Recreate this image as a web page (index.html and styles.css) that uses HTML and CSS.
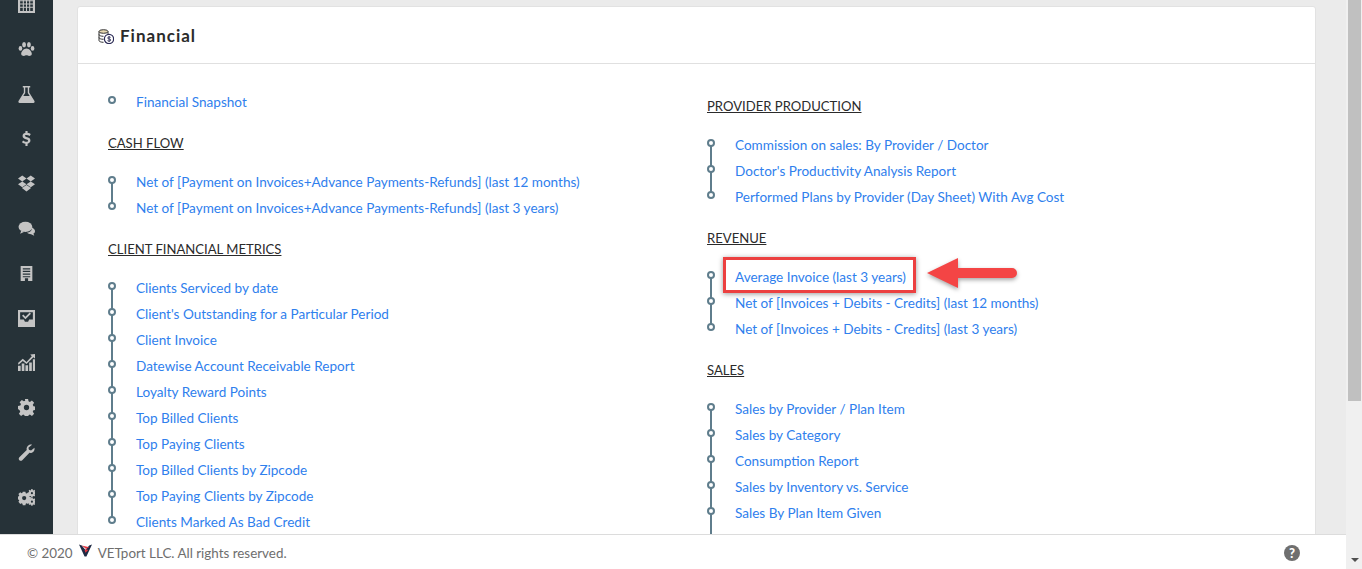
FILE: index.html
```html
<!DOCTYPE html>
<html lang="en">
<head>
<meta charset="utf-8">
<title>Financial Reports</title>
<link rel="stylesheet" href="styles.css">
</head>
<body>
<div class="app">
  <nav class="sidebar">
    <svg class="ico" viewBox="0 0 16 16"><path d="M0 0v16h16V0zM2 2h2.500v2H2zM5.500 2h2v2h-2zM8.500 2h2v2h-2zM11.500 2H14v2h-2.500zM2 5h2.500v2H2zM5.500 5h2v2h-2zM8.500 5h2v2h-2zM11.500 5H14v2h-2.500zM2 8h2.500v2H2zM5.500 8h2v2h-2zM8.500 8h2v2h-2zM11.500 8H14v2h-2.500zM2 11h2.500v3H2zM5.500 11h2v3h-2zM8.500 11h2v3h-2zM11.500 11H14v3h-2.500z" fill-rule="evenodd"/></svg>
    <svg class="ico" viewBox="0 0 16 16"><ellipse cx="2.300" cy="7" rx="1.700" ry="2.200"/><ellipse cx="5.700" cy="3.500" rx="1.800" ry="2.500"/><ellipse cx="10.300" cy="3.500" rx="1.800" ry="2.500"/><ellipse cx="13.700" cy="7" rx="1.700" ry="2.200"/><path d="M8 7c-2.500 0-5 3-5 5 0 2 1.500 2 2.500 2S7 13.500 8 13.500s1.500.5 2.500.5 2.500 0 2.500-2c0-2-2.500-5-5-5z"/></svg>
    <svg class="ico" viewBox="0 0 16 16"><path d="M4.500 0h7v1.300h-1V6l5 8.200c.4.800 0 1.800-1 1.800h-13c-1 0-1.400-1-1-1.800l5-8.200V1.300h-1zM6.800 1.300v5.200L5 9.500h6L9.200 6.500V1.300z" fill-rule="evenodd"/></svg>
    <svg class="ico" viewBox="0 0 16 16"><path d="M7 1h2v1.600c1.300.2 2.300.7 3 1.200l-1 1.800c-.9-.6-1.900-1-3-1-1 0-1.500.4-1.500.9 0 .7 1 1 2.200 1.400 1.800.5 3 1.300 3 3 0 1.600-1.200 2.700-2.700 3V15H7v-2c-1.300-.2-2.500-.7-3.300-1.400l1.100-1.800c.9.700 2 1.200 3.100 1.200 1 0 1.600-.4 1.600-1 0-.7-.9-1-2.200-1.400C5.600 8.100 4.300 7.300 4.300 5.600c0-1.500 1.100-2.700 2.700-3z"/></svg>
    <svg class="ico" viewBox="0 0 16 16"><path d="M4 .5l4 2.700L4 6 0 3.200zM12 .5l4 2.700L12 6 8 3.200zM0 8.800L4 6l4 2.800-4 2.700zM16 8.800L12 6 8 8.800l4 2.700zM3.700 12.300L8 9.500l4.300 2.800L8 15.500z"/></svg>
    <svg class="ico" viewBox="0 0 16 16"><ellipse cx="7" cy="6.500" rx="6.500" ry="4.800"/><path d="M3 10l-1 3 4-2zM13 7c2 1 3 2 3 3.500 0 1-.6 1.800-1.500 2.300l.8 2-3-1.500c-1.500 0-3-.5-3.800-1.500 2.500 0 5-2 4.500-4.800z"/></svg>
    <svg class="ico" viewBox="0 0 16 16"><path d="M2.500 1h11v14h-4v-2.500h-3V15h-4zM4.500 3v1.200h7V3zM4.500 5.500v1.200h7V5.500zM4.500 8v1.200h7V8zM4.500 10.500v1h7v-1z" fill-rule="evenodd"/></svg>
    <svg class="ico" viewBox="0 0 16 16"><path d="M0 0h16v16H0zM2 2v7h3.500l1 2h3l1-2H14V2zM3.800 5.500L5 4.300l2 2 4-4 1.200 1.200L7 8.800z" fill-rule="evenodd"/></svg>
    <svg class="ico" viewBox="0 0 16 16"><path d="M0 11h2.500v5H0zM3.500 9H6v7H3.500zM7 10.500h2.500V16H7zM10.500 8H13v8h-2.500zM14 5h2v11h-2zM0 8.500l4.500-4 3.500 3L13 2l-1.500-1.500L16 0v4.500L14.500 3 8 9.500l-3.500-3-4 3.500z"/></svg>
    <svg class="ico" viewBox="0 0 16 16"><path d="M6.500 0h3l.4 2.200 1.300.6 1.900-1.300 2.100 2.100-1.300 1.900.6 1.300 2.200.4v3l-2.200.4-.6 1.300 1.300 1.900-2.100 2.100-1.900-1.300-1.300.6-.4 2.200h-3l-.4-2.200-1.300-.6-1.900 1.300L.8 13.800l1.300-1.900-.6-1.300L0 9.500v-3l2.200-.4.600-1.300L1.500 3l2.100-2.100 1.900 1.300 1.300-.6zM8 5.500a2.500 2.500 0 1 0 0 5 2.500 2.500 0 0 0 0-5z" fill-rule="evenodd"/></svg>
    <svg class="ico" viewBox="0 0 16 16"><path d="M15.500 3.500c.5 2-.5 4-2.500 4.700-.8.300-1.500.3-2.200.1L4 15.200c-.8.800-2 .8-2.700 0-.8-.8-.8-2 0-2.700l6.900-6.800c-.5-2 .5-4 2.500-4.900.8-.3 1.700-.4 2.500-.2L9.800 3.500l.5 2 2 .5z"/></svg>
    <svg class="ico" viewBox="0 0 16 16"><path d="M4.500 4.500h2.500l.3 1.400.9.400 1.200-.8 1.700 1.700-.8 1.200.4.900 1.400.3v2.500l-1.400.3-.4.900.8 1.200-1.700 1.700-1.200-.8-.9.400-.3 1.400H4.500l-.3-1.400-.9-.4-1.200.8L.4 14.100l.8-1.200-.4-.9-1.400-.3V9.200l1.400-.3.4-.9-.8-1.200 1.700-1.700 1.200.8.900-.4zM5.800 8.500a2 2 0 1 0 0 4 2 2 0 0 0 0-4z" fill-rule="evenodd" transform="translate(0 -2)"/><path d="M12.500 0h1.200l.2 1 .6.300.8-.5.900.9-.5.8.3.600 1 .2V4.500l-1 .2-.3.600.5.800-.9.900-.8-.5-.6.300-.2 1h-1.200l-.2-1-.6-.3-.8.500-.9-.9.500-.8-.3-.6-1-.2V3.300l1-.2.3-.6-.5-.8.900-.9.800.5.600-.3zM13.100 2.900a1 1 0 1 0 0 2 1 1 0 0 0 0-2z" fill-rule="evenodd"/><path d="M12.500 9h1.200l.2 1 .6.300.8-.5.900.9-.5.800.3.600 1 .2v1.200l-1 .2-.3.600.5.800-.9.900-.8-.5-.6.300-.2 1h-1.200l-.2-1-.6-.3-.8.500-.9-.9.500-.8-.3-.6-1-.2v-1.200l1-.2.300-.6-.5-.8.900-.9.800.5.600-.3zM13.100 11.900a1 1 0 1 0 0 2 1 1 0 0 0 0-2z" fill-rule="evenodd" transform="translate(0 -1)"/></svg>
  </nav>

  <main class="main">
    <section class="card">
      <header class="card-head">
        <svg class="fin-ico" viewBox="0 0 16 15"><g fill="none" stroke="#333" stroke-width="1"><ellipse cx="5.500" cy="2.500" rx="4.500" ry="1.800" fill="#e8d9b0"/><path d="M1 2.500v9c0 1 2 1.800 4.500 1.800M10 2.500V6M1 5.500c0 1 2 1.800 4.500 1.800M1 8.500c0 1 2 1.800 4.500 1.800" /></g><circle cx="11" cy="10" r="4.600" fill="#fff" stroke="#2a2a55" stroke-width="1.200"/><path d="M12.600 8.400c-1-.7-3-.5-3 .6 0 1.400 3.200.6 3.200 2 0 1.200-2.200 1.300-3.300.6M11.100 7v6" fill="none" stroke="#2a2a55" stroke-width=".9"/></svg>
        <h2 class="card-title">Financial</h2>
      </header>
      <div class="columns">
        <div class="col col-left">
          <ul class="timeline">
            <li><a href="#">Financial Snapshot</a></li>
          </ul>
          <h3 class="group">CASH FLOW</h3>
          <ul class="timeline">
            <li><a href="#">Net of [Payment on Invoices+Advance Payments-Refunds] (last 12 months)</a></li>
            <li><a href="#">Net of [Payment on Invoices+Advance Payments-Refunds] (last 3 years)</a></li>
          </ul>
          <h3 class="group">CLIENT FINANCIAL METRICS</h3>
          <ul class="timeline">
            <li><a href="#">Clients Serviced by date</a></li>
            <li><a href="#">Client's Outstanding for a Particular Period</a></li>
            <li><a href="#">Client Invoice</a></li>
            <li><a href="#">Datewise Account Receivable Report</a></li>
            <li><a href="#">Loyalty Reward Points</a></li>
            <li><a href="#">Top Billed Clients</a></li>
            <li><a href="#">Top Paying Clients</a></li>
            <li><a href="#">Top Billed Clients by Zipcode</a></li>
            <li><a href="#">Top Paying Clients by Zipcode</a></li>
            <li><a href="#">Clients Marked As Bad Credit</a></li>
          </ul>
        </div>
        <div class="col col-right">
          <h3 class="group">PROVIDER PRODUCTION</h3>
          <ul class="timeline">
            <li><a href="#">Commission on sales: By Provider / Doctor</a></li>
            <li><a href="#">Doctor's Productivity Analysis Report</a></li>
            <li><a href="#">Performed Plans by Provider (Day Sheet) With Avg Cost</a></li>
          </ul>
          <h3 class="group">REVENUE</h3>
          <ul class="timeline">
            <li class="marked"><a href="#">Average Invoice (last 3 years)</a>
              <svg class="arrow" viewBox="0 0 90 30"><path d="M0 15L31 0v10h54a5 5 0 0 1 0 10H31v10z" fill="#f44545"/></svg>
            </li>
            <li><a href="#">Net of [Invoices + Debits - Credits] (last 12 months)</a></li>
            <li><a href="#">Net of [Invoices + Debits - Credits] (last 3 years)</a></li>
          </ul>
          <h3 class="group">SALES</h3>
          <ul class="timeline timeline-open">
            <li><a href="#">Sales by Provider / Plan Item</a></li>
            <li><a href="#">Sales by Category</a></li>
            <li><a href="#">Consumption Report</a></li>
            <li><a href="#">Sales by Inventory vs. Service</a></li>
            <li><a href="#">Sales By Plan Item Given</a></li>
          </ul>
        </div>
      </div>
    </section>
  </main>

  <div class="scrollbar">
    <div class="thumb"></div>
    <div class="scroll-down"></div>
  </div>

  <footer class="footer">
    <span class="copy">© 2020</span>
    <svg class="logo" viewBox="0 0 14 14"><path d="M0 0l3 1 4 5 4-5 3-1-6 13H6z" fill="#1f2a44"/><path d="M3 1l8 2-4 2 3 1-3 3-1-3 2-1z" fill="#e0343f"/></svg>
    <span class="copy">VETport LLC. All rights reserved.</span>
    <span class="help">?</span>
  </footer>
</div>
</body>
</html>
```
FILE: styles.css
```css
*, *::before, *::after { box-sizing: border-box; }
html, body { margin: 0; height: 100%; overflow: hidden; }
body { font-family: "Lato", "Liberation Sans", sans-serif; font-size: 13.550px; background: #ebebeb; }

.app { position: relative; display: flex; height: 569px; overflow: hidden; }

.sidebar {
  flex: 0 0 53px;
  background: #263238;
  display: flex;
  flex-direction: column;
  align-items: center;
  gap: 27.800px;
  margin-top: -4px;
  height: 573px;
}
.ico { width: 17px; height: 17px; fill: #c4c4c4; flex: none; }

.main { flex: 1; padding: 6px 30px 0 24px; min-width: 0; }
.card {
  background: #fff;
  border: 1px solid #e2e2e2;
  border-radius: 3px;
  height: 700px;
}
.card-head {
  height: 57px;
  border-bottom: 1px solid #e0e0e0;
  display: flex;
  align-items: center;
  gap: 6px;
  padding: 0 0 0 20px;
}
.fin-ico { width: 16px; height: 15px; margin-top: 3px; }
.card-title { margin: 0; font-size: 17px; font-weight: 700; letter-spacing: 1px; color: #2b2b2b; }

.columns { display: flex; padding: 25px 0 0 30px; }
.col-left { flex: 0 0 599px; }
.col-right { flex: 1; padding-top: 4px; }

.group {
  margin: 15px 0 13px;
  font-size: 13.100px;
  font-weight: 400;
  line-height: 26px;
  color: #2b2b2b;
  text-decoration: underline;
}
.col-right .group:first-child { margin-top: 0; }

.timeline { list-style: none; margin: 0; padding: 0; }
.timeline li { position: relative; height: 26px; line-height: 26px; padding-left: 28px; }
.timeline li::before {
  content: "";
  position: absolute;
  left: 0;
  top: 7px;
  width: 8px;
  height: 8px;
  border: 2px solid #5f7d8c;
  border-radius: 50%;
  background: #fff;
  z-index: 1;
}
.timeline li:not(:last-child)::after,
.timeline-open li:last-child::after {
  content: "";
  position: absolute;
  left: 3px;
  top: 13px;
  width: 2px;
  height: 26px;
  background: #5f7d8c;
}
.timeline a { color: #2f80ed; text-decoration: none; white-space: nowrap; }

.marked a { position: relative; }
.marked a::after {
  content: "";
  position: absolute;
  left: -12px;
  right: -10px;
  top: -12px;
  height: 36px;
  border: 3px solid #ec4040;
  box-shadow: 0 1px 5px rgba(0,0,0,.4);
}
.arrow {
  position: absolute;
  left: 220px;
  top: -6px;
  width: 90px;
  height: 30px;
  filter: drop-shadow(0 2px 2px rgba(0,0,0,.35));
}

.scrollbar { position: relative; flex: 0 0 16px; background: #f0f0f0; z-index: 3; }
.thumb { width: 13px; height: 401px; margin-left: 2px; background: #c0c0c0; }
.scroll-down {
  position: absolute;
  bottom: 7px;
  left: 5px;
  border: 4px solid transparent;
  border-top: 4px solid #505050;
  border-bottom: 0;
}

.footer {
  position: absolute;
  left: 0;
  right: 16px;
  bottom: 0;
  height: 35px;
  background: #fff;
  border-top: 1px solid #dcdcdc;
  display: flex;
  align-items: center;
  gap: 6px;
  padding: 1px 46px 0 27px;
  z-index: 2;
}
.copy { color: #6e6e6e; font-size: 13.400px; }
.logo { width: 13px; height: 14px; margin: -4px 0 0 0; }
.help {
  margin-left: auto;
  margin-top: 1px;
  width: 16px;
  height: 16px;
  border-radius: 50%;
  background: #6f6f6f;
  color: #fff;
  font-size: 13px;
  font-weight: 900;
  line-height: 16px;
  text-align: center;
}
```
